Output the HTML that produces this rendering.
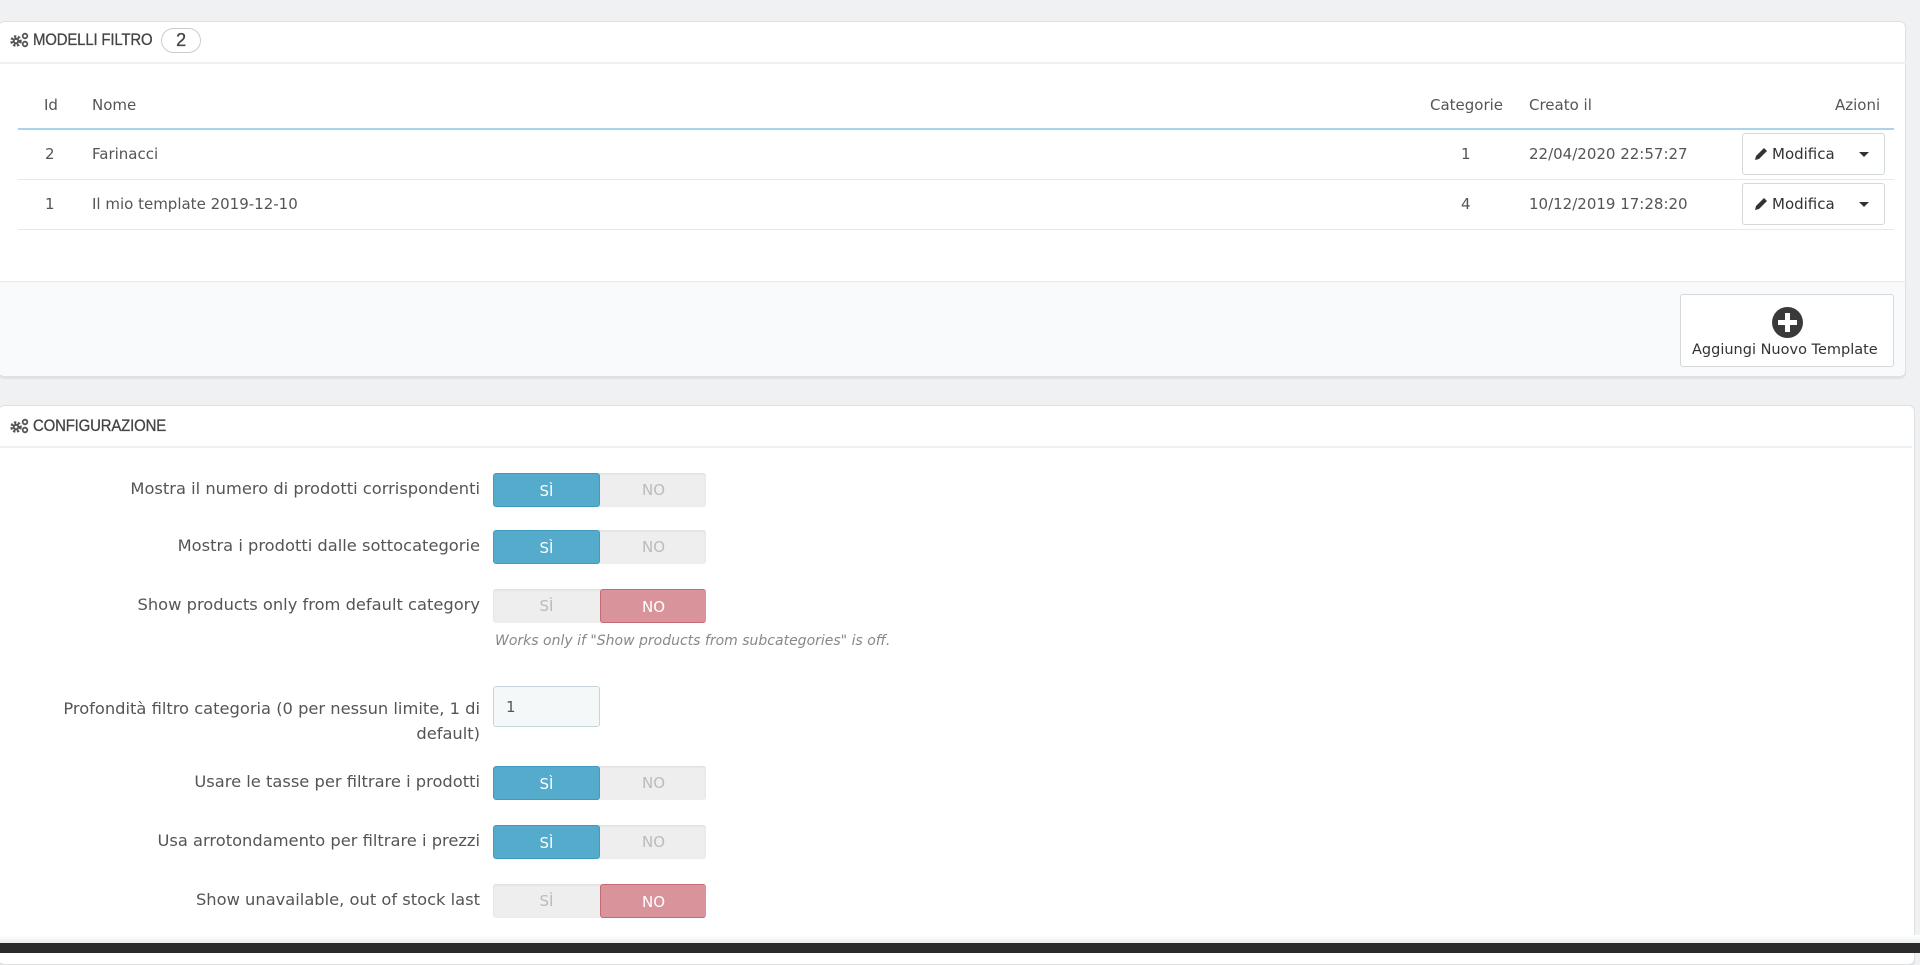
<!DOCTYPE html>
<html><head><meta charset="utf-8"><style>
*{box-sizing:border-box;margin:0;padding:0}
body{width:1920px;height:953px;background:#eff1f2;font-family:"DejaVu Sans","Liberation Sans",sans-serif;color:#555;font-size:15px;position:relative;overflow:hidden}
.a{position:absolute}
.panel{position:absolute;background:#fff;border:1px solid #dde1e4;border-radius:6px;box-shadow:0 2px 0 rgba(0,0,0,.06)}
.hd{font-family:"Liberation Sans",sans-serif;font-size:17px;color:#444;white-space:nowrap;transform:scaleX(.88);transform-origin:left;letter-spacing:-.2px;-webkit-text-stroke:.3px #444}
.hl{position:absolute;height:2px;background:#eef0f1}
.t{position:absolute;white-space:nowrap;line-height:20px}
.line{position:absolute;left:18px;width:1876px;height:1px;background:#e6e9eb}
.btn{position:absolute;background:#fff;border:1px solid #d3d8db;border-radius:3px}
.tg{position:absolute;left:493px;width:213px;height:34px;border-radius:3px;overflow:hidden;background:#eeeeee;box-shadow:inset 0 1px 2px rgba(0,0,0,.08)}
.tg span{position:absolute;top:0;width:107px;height:34px;line-height:34px;text-align:center;color:#bbb;font-size:15px}
.tg .on{background:#55abcc;color:#fff;border:1px solid #3e9cbf;border-radius:3px}
.tg .off{background:#d8949a;color:#fff;border:1px solid #c56b74;border-radius:3px}
.lb{position:absolute;right:1440px;text-align:right;white-space:nowrap;font-size:16.3px}
</style></head><body>
<div class="panel" style="left:-2px;top:21px;width:1908px;height:356px;overflow:hidden">
  <div class="a" style="left:0;top:259px;width:1908px;height:97px;background:#f8fafc;border-top:1px solid #e6e9eb"></div>
</div>
<svg class="a" style="left:10px;top:32px" width="20" height="16" viewBox="0 0 20 16"><circle cx="6" cy="9" r="4" fill="none" stroke="#555" stroke-width="3.5" stroke-dasharray="2 1.4"/><circle cx="6" cy="9" r="3.2" fill="#555"/><circle cx="6" cy="9" r="1.3" fill="#fff"/><circle cx="15" cy="4" r="2.3" fill="none" stroke="#555" stroke-width="1.8"/><circle cx="15" cy="12" r="2.3" fill="none" stroke="#555" stroke-width="1.8"/></svg>
<div class="t hd" style="left:33px;top:30px">MODELLI FILTRO</div>
<div class="a hd" style="left:161px;top:28px;width:40px;height:25px;border:1px solid #ccc;border-radius:13px;text-align:center;line-height:23px;font-size:18px;transform:none">2</div>
<div class="hl" style="left:0;top:62px;width:1906px"></div>

<div class="t" style="left:44px;top:95px">Id</div>
<div class="t" style="left:92px;top:95px">Nome</div>
<div class="t" style="left:1430px;top:95px">Categorie</div>
<div class="t" style="left:1529px;top:95px">Creato il</div>
<div class="t" style="left:1835px;top:95px">Azioni</div>
<div class="line" style="top:128px;height:2px;background:#a9d3ee"></div>
<div class="t" style="left:45px;top:144px">2</div>
<div class="t" style="left:92px;top:144px">Farinacci</div>
<div class="t" style="left:1461px;top:144px">1</div>
<div class="t" style="left:1529px;top:144px">22/04/2020 22:57:27</div>
<div class="line" style="top:179px"></div>
<div class="t" style="left:45px;top:194px">1</div>
<div class="t" style="left:92px;top:194px">Il mio template 2019-12-10</div>
<div class="t" style="left:1461px;top:194px">4</div>
<div class="t" style="left:1529px;top:194px">10/12/2019 17:28:20</div>
<div class="line" style="top:229px"></div>

<div class="btn" style="left:1742px;top:133px;width:143px;height:42px"><svg class="a" style="left:11px;top:13px" width="14" height="14" viewBox="0 0 14 14"><path d="M1 13 L2 9 L10 1 L13 4 L5 12 Z" fill="#333"/></svg><span class="t" style="left:29px;top:10px;color:#333">Modifica</span><span class="a" style="left:116px;top:18px;border:5px solid transparent;border-top:5px solid #333"></span></div>
<div class="btn" style="left:1742px;top:183px;width:143px;height:42px"><svg class="a" style="left:11px;top:13px" width="14" height="14" viewBox="0 0 14 14"><path d="M1 13 L2 9 L10 1 L13 4 L5 12 Z" fill="#333"/></svg><span class="t" style="left:29px;top:10px;color:#333">Modifica</span><span class="a" style="left:116px;top:18px;border:5px solid transparent;border-top:5px solid #333"></span></div>

<div class="btn" style="left:1680px;top:294px;width:214px;height:73px"><span class="a" style="left:91px;top:12px;width:31px;height:31px;border-radius:50%;background:#3a3a3a"></span><span class="a" style="left:104px;top:18px;width:5px;height:19px;background:#fff"></span><span class="a" style="left:97px;top:25px;width:19px;height:5px;background:#fff"></span><span class="t" style="left:11px;top:45px;color:#333;font-size:14.5px">Aggiungi Nuovo Template</span></div>

<div class="panel" style="left:-2px;top:405px;width:1917px;height:560px"></div>
<svg class="a" style="left:10px;top:418px" width="20" height="16" viewBox="0 0 20 16"><circle cx="6" cy="9" r="4" fill="none" stroke="#555" stroke-width="3.5" stroke-dasharray="2 1.4"/><circle cx="6" cy="9" r="3.2" fill="#555"/><circle cx="6" cy="9" r="1.3" fill="#fff"/><circle cx="15" cy="4" r="2.3" fill="none" stroke="#555" stroke-width="1.8"/><circle cx="15" cy="12" r="2.3" fill="none" stroke="#555" stroke-width="1.8"/></svg>
<div class="t hd" style="left:33px;top:416px">CONFIGURAZIONE</div>
<div class="hl" style="left:0;top:446px;width:1912px"></div>

<div class="lb" style="top:479px">Mostra il numero di prodotti corrispondenti</div>
<div class="tg" style="top:473px"><span class="on" style="left:0">SÌ</span><span style="left:107px">NO</span></div>
<div class="lb" style="top:536px">Mostra i prodotti dalle sottocategorie</div>
<div class="tg" style="top:530px"><span class="on" style="left:0">SÌ</span><span style="left:107px">NO</span></div>
<div class="lb" style="top:595px">Show products only from default category</div>
<div class="tg" style="top:589px"><span style="left:0">SÌ</span><span class="off" style="left:107px">NO</span></div>
<div class="t" style="left:495px;top:631px;font-style:italic;font-size:14px;color:#888">Works only if "Show products from subcategories" is off.</div>
<div class="lb" style="top:696px;line-height:25px">Profondità filtro categoria (0 per nessun limite, 1 di<br>default)</div>
<div class="a" style="left:493px;top:686px;width:107px;height:41px;border:1px solid #c7d6db;border-radius:3px;background:#f5f8f9;padding:11px 12px;font-size:15px">1</div>
<div class="lb" style="top:772px">Usare le tasse per filtrare i prodotti</div>
<div class="tg" style="top:766px"><span class="on" style="left:0">SÌ</span><span style="left:107px">NO</span></div>
<div class="lb" style="top:831px">Usa arrotondamento per filtrare i prezzi</div>
<div class="tg" style="top:825px"><span class="on" style="left:0">SÌ</span><span style="left:107px">NO</span></div>
<div class="lb" style="top:890px">Show unavailable, out of stock last</div>
<div class="tg" style="top:884px"><span style="left:0">SÌ</span><span class="off" style="left:107px">NO</span></div>

<div class="a" style="left:0;top:935px;width:1920px;height:8px;background:linear-gradient(#fff,#eceeef)"></div>
<div class="a" style="left:0;top:943px;width:1920px;height:10px;background:#2b2b2b"></div>
</body></html>
